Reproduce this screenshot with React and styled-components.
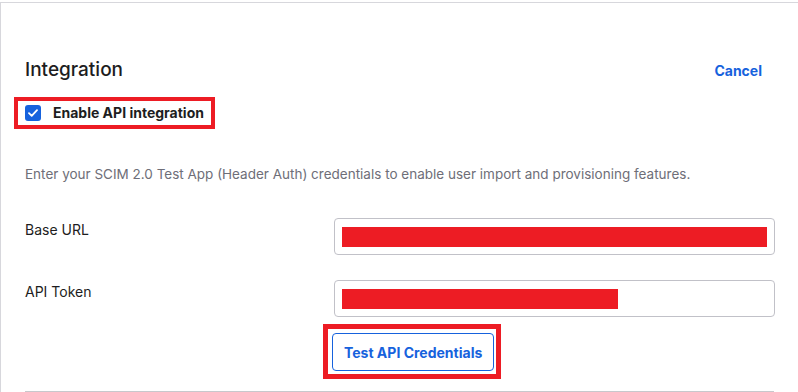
import styled, { createGlobalStyle } from "styled-components";

const GlobalStyle = createGlobalStyle`
  html, body {
    margin: 0;
    background: #ffffff;
  }
  body {
    font-family: Inter, "Noto Sans", sans-serif;
    color: #1d1d21;
  }
`;

function App() {
  return (
    <>
      <GlobalStyle />
      <Card>
        <Header>
          <Title>Integration</Title>
          <CancelLink href="#">Cancel</CancelLink>
        </Header>
        <Highlight $top="15px" $pad="2px 7px 2px 7px">
          <CheckRow>
            <CheckBox>
              <svg width="10" height="8" viewBox="0 0 10 8" fill="none">
                <path d="M1 4.2 3.7 6.8 9 1.2" stroke="#fff" strokeWidth="1.8" strokeLinecap="round" strokeLinejoin="round" />
              </svg>
            </CheckBox>
            <CheckLabel>Enable API integration</CheckLabel>
          </CheckRow>
        </Highlight>
        <Description>
          Enter your SCIM 2.0 Test App (Header Auth) credentials to enable user import and provisioning features.
        </Description>
        <Form>
          <FieldLabel>Base URL</FieldLabel>
          <Field>
            <Redacted $width="425px" />
          </Field>
          <FieldLabel>API Token</FieldLabel>
          <Field>
            <Redacted $width="276px" />
          </Field>
          <span />
          <ButtonCell>
            <Highlight $top="0" $pad="4px 2px 3px 4px" $border="5px">
              <TestButton type="button">Test API Credentials</TestButton>
            </Highlight>
          </ButtonCell>
        </Form>
        <Divider />
      </Card>
    </>
  );
}

export default App;

const Card = styled.div`
  margin-top: 2px;
  height: 390px;
  box-sizing: border-box;
  border-top: 1px solid #d7d7dc;
  border-left: 1px solid #d7d7dc;
  padding: 55px 24px 0 24px;
`;

const Header = styled.div`
  display: flex;
  justify-content: space-between;
  align-items: baseline;
  padding-right: 12px;
`;

const Title = styled.h2`
  margin: 0;
  font-size: 19px;
  line-height: 24px;
  font-weight: 500;
  color: #1d1d21;
`;

const CancelLink = styled.a`
  font-size: 14px;
  font-weight: 700;
  color: #1662dd;
  text-decoration: none;
`;

const Highlight = styled.div`
  display: inline-flex;
  margin-top: ${(p) => p.$top};
  margin-left: -11px;
  border: ${(p) => p.$border || "4px"} solid #ed1c24;
  padding: ${(p) => p.$pad};
`;

const CheckRow = styled.label`
  display: flex;
  align-items: center;
  gap: 12px;
`;

const CheckBox = styled.span`
  width: 16px;
  height: 16px;
  border-radius: 3px;
  background: #1662dd;
  display: flex;
  align-items: center;
  justify-content: center;
`;

const CheckLabel = styled.span`
  font-size: 14px;
  line-height: 20px;
  font-weight: 700;
  color: #1d1d21;
`;

const Description = styled.p`
  margin: 35px 0 0 0;
  font-size: 13.5px;
  line-height: 20px;
  color: #6e6e78;
`;

const Form = styled.div`
  display: grid;
  grid-template-columns: 309px 1fr;
  row-gap: 25px;
  margin-top: 34px;
`;

const FieldLabel = styled.div`
  font-size: 14px;
  line-height: 20px;
  padding-top: 2px;
  color: #1d1d21;
`;

const Field = styled.div`
  height: 37px;
  box-sizing: border-box;
  border: 1px solid #c1c1c8;
  border-radius: 4px;
  padding: 8px 7px 8px 7px;
`;

const Redacted = styled.span`
  display: block;
  width: ${(p) => p.$width};
  height: 20px;
  background: #ed1c24;
`;

const ButtonCell = styled.div`
  margin-top: -18px;
`;

const TestButton = styled.button`
  height: 38px;
  padding: 0 11px;
  box-sizing: border-box;
  background: #ffffff;
  border: 1px solid #1662dd;
  border-radius: 4px;
  color: #1662dd;
  font-family: inherit;
  font-size: 14px;
  font-weight: 700;
`;

const Divider = styled.div`
  margin-top: 12px;
  border-top: 1px solid #c8c8cc;
`;
